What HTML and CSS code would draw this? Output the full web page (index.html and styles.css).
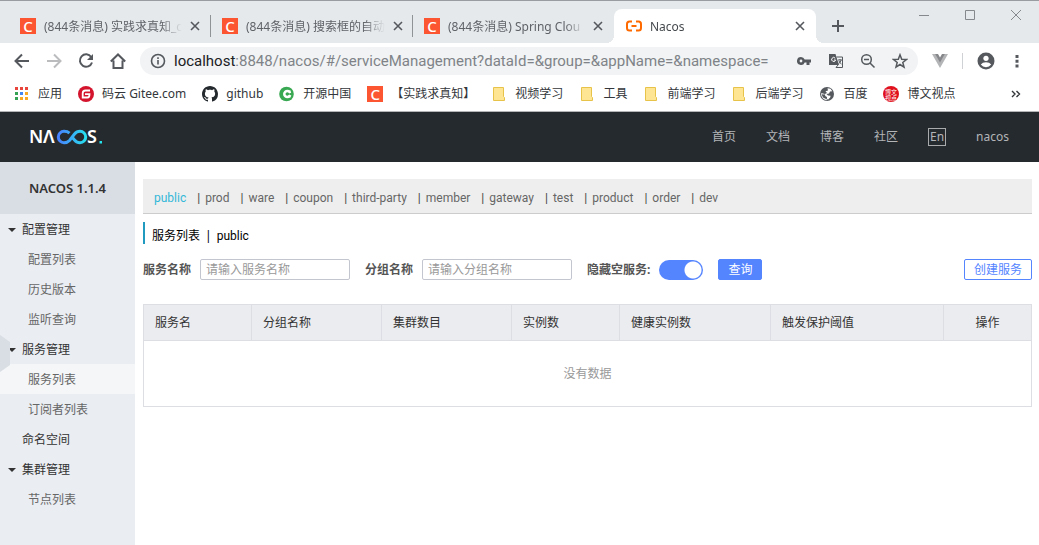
FILE: index.html
```html
<!DOCTYPE html>
<html lang="zh-CN">
<head>
<meta charset="utf-8">
<title>Nacos</title>
<link rel="stylesheet" href="styles.css">
</head>
<body>
<div class="browser">
  <div class="tabstrip">
    <div class="tab">
      <span class="csdn">C</span><span class="tab-title">(844条消息) 实践求真知_c</span>
      <button class="close" aria-label="关闭标签页"><svg width="10" height="10" viewBox="0 0 10 10"><path d="M1 1l8 8M9 1l-8 8"/></svg></button>
    </div>
    <div class="tab divided">
      <span class="csdn">C</span><span class="tab-title">(844条消息) 搜索框的自动</span>
      <button class="close" aria-label="关闭标签页"><svg width="10" height="10" viewBox="0 0 10 10"><path d="M1 1l8 8M9 1l-8 8"/></svg></button>
    </div>
    <div class="tab divided">
      <span class="csdn">C</span><span class="tab-title">(844条消息) Spring Clou</span>
      <button class="close" aria-label="关闭标签页"><svg width="10" height="10" viewBox="0 0 10 10"><path d="M1 1l8 8M9 1l-8 8"/></svg></button>
    </div>
    <div class="tab active">
      <svg class="ali" width="16" height="16" viewBox="0 0 16 16"><path d="M6 3.500H3.500Q1 3.500 1 6v4q0 2.500 2.500 2.500H6M10 3.500h2.500Q15 3.500 15 6v4q0 2.500-2.500 2.500H10M5.500 8h5"/></svg><span class="tab-title">Nacos</span>
      <button class="close" aria-label="关闭标签页"><svg width="10" height="10" viewBox="0 0 10 10"><path d="M1 1l8 8M9 1l-8 8"/></svg></button>
    </div>
    <button class="newtab" aria-label="新标签页"><svg width="12" height="12" viewBox="0 0 12 12"><path d="M6 0v12M0 6h12"/></svg></button>
    <div class="window-buttons">
      <button aria-label="最小化"><svg width="12" height="12" viewBox="0 0 12 12"><path d="M1 6.500h10"/></svg></button>
      <button aria-label="最大化"><svg width="12" height="12" viewBox="0 0 12 12"><path d="M1.500 1.500h9v9h-9z"/></svg></button>
      <button aria-label="关闭"><svg width="12" height="12" viewBox="0 0 12 12"><path d="M1 1l10 10M11 1L1 11"/></svg></button>
    </div>
  </div>

  <div class="toolbar">
    <div class="nav-buttons">
      <button aria-label="后退"><svg width="16" height="16" viewBox="0 0 16 16"><path d="M15 8H2M8 1.500L1.500 8 8 14.500"/></svg></button>
      <button class="off" aria-label="前进"><svg width="16" height="16" viewBox="0 0 16 16"><path d="M1 8h13M8 1.500L14.500 8 8 14.500"/></svg></button>
      <button aria-label="重新加载"><svg width="16" height="16" viewBox="0 0 16 16"><path d="M13.200 4A6.200 6.200 0 1 0 14 9.500"/><path class="fill" d="M15 1v6H9z"/></svg></button>
      <button aria-label="主页"><svg width="16" height="16" viewBox="0 0 16 16"><path d="M.8 8.500L8 1.500l7.200 7M3.500 7.500V15h9V7.500"/></svg></button>
    </div>
    <div class="omnibox">
      <svg class="info" width="16" height="16" viewBox="0 0 16 16"><circle cx="8" cy="8" r="6.500"/><path d="M8 7v4.500M8 4.200v1.800"/></svg>
      <div class="url" role="textbox" aria-label="地址栏" contenteditable="true" spellcheck="false"><span class="host">localhost</span>:8848/nacos/#/serviceManagement?dataId=&amp;group=&amp;appName=&amp;namespace=</div>
      <div class="omni-icons">
        <button aria-label="密码"><svg width="16" height="16" viewBox="0 0 16 16"><path class="fill" fill-rule="evenodd" d="M5 4a4 4 0 0 1 3.700 2.500H15v3h-1.500V12h-3V9.500H8.700A4 4 0 1 1 5 4zm0 2.600a1.400 1.400 0 1 0 0 2.800 1.400 1.400 0 0 0 0-2.800z"/></svg></button>
        <button aria-label="翻译"><svg width="16" height="16" viewBox="0 0 16 16"><path class="fill" d="M1 1h6.500l3.500 11H1z"/><path class="thin" d="M8.500 4H14.500v10.500H8l2-2.500M10 7h4M12 6v1M13 7.200q-.5 2.300-2.500 3.500M11 8q.8 2 2.500 3"/><path class="white" d="M7.200 5.200A2 2 0 1 0 7.600 7H6"/></svg></button>
        <button aria-label="缩放"><svg width="16" height="16" viewBox="0 0 16 16"><path class="medium" d="M10 10l4.500 4.500M4 6.500h5"/><circle class="medium" cx="6.500" cy="6.500" r="4.800"/></svg></button>
        <button aria-label="收藏"><svg width="16" height="16" viewBox="0 0 16 16"><path class="medium" d="M8 1.800l1.700 4.400 4.700.3-3.600 3 1.200 4.600L8 11.500l-4 2.600 1.200-4.600-3.600-3 4.700-.3z"/></svg></button>
      </div>
    </div>
    <div class="extensions">
      <svg width="16" height="16" viewBox="0 0 16 16"><path fill="#b3b5b7" d="M0 1h5l3 5 3-5h5L8 15z"/><path fill="#85878a" d="M3.200 1H6l2 3.500L10 1h2.800L8 9.500z"/></svg>
      <span class="bar"></span>
      <button aria-label="用户"><svg width="18" height="18" viewBox="0 0 18 18"><circle class="fill" cx="9" cy="9" r="8.500"/><g class="person"><circle cx="9" cy="6.300" r="2.600"/><path d="M3.800 12.600q1.700-2.400 5.200-2.400t5.200 2.400q-2 2.600-5.200 2.600t-5.200-2.600z"/></g></svg></button>
      <button aria-label="菜单"><svg width="16" height="16" viewBox="0 0 16 16"><path class="fill" d="M6.500 2h3v3h-3zM6.500 6.800h3v3h-3zM6.500 11.500h3v3h-3z"/></svg></button>
    </div>
  </div>

  <nav class="bookmarks">
    <a href="#"><svg width="16" height="16" viewBox="0 0 16 16"><path fill="#e8453c" d="M1 1h3v3H1zM6 1h3v3H6zM11 1h3v3h-3z"/><path fill="#34a153" d="M1 6h3v3H1zM1 11h3v3H1z"/><path fill="#4285f4" d="M6 6h3v3H6z"/><path fill="#f9a825" d="M11 6h3v3h-3zM6 11h3v3H6zM11 11h3v3h-3z"/></svg>应用</a>
    <a href="#"><svg width="16" height="16" viewBox="0 0 16 16"><circle cx="8" cy="8" r="8" fill="#d4142d"/><path fill="none" stroke="#fff" stroke-width="1.800" d="M12 4.500H7.500Q4.700 4.500 4.700 7.300v4.200H9.500Q11.500 11.500 11.500 8.200H7"/></svg>码云 Gitee.com</a>
    <a href="#"><svg width="16" height="16" viewBox="0 0 16 16"><path fill="#24292e" d="M8 0C3.580 0 0 3.580 0 8c0 3.540 2.290 6.530 5.470 7.590.4.070.55-.17.55-.38 0-.19-.01-.82-.01-1.490-2.010.37-2.530-.49-2.690-.94-.09-.23-.48-.94-.82-1.130-.28-.15-.68-.52-.01-.53.63-.01 1.080.58 1.230.82.72 1.210 1.870.87 2.330.66.07-.52.28-.87.51-1.070-1.780-.2-3.640-.89-3.640-3.950 0-.87.31-1.590.82-2.150-.08-.2-.36-1.020.08-2.120 0 0 .67-.21 2.200.82.64-.18 1.320-.27 2-.27s1.360.09 2 .27c1.530-1.040 2.200-.82 2.200-.82.44 1.100.16 1.920.08 2.120.51.56.82 1.270.82 2.150 0 3.070-1.870 3.750-3.650 3.950.29.25.54.73.54 1.480 0 1.070-.01 1.930-.01 2.200 0 .21.15.46.55.38A8.010 8.010 0 0 0 16 8c0-4.420-3.580-8-8-8z"/></svg>github</a>
    <a href="#"><svg width="16" height="16" viewBox="0 0 16 16"><circle cx="7.500" cy="8" r="7.300" fill="#39a852"/><path fill="none" stroke="#fff" stroke-width="2.600" d="M11.800 5.500l-1.300.4A3 3 0 1 0 10.500 10l1.300.6"/></svg>开源中国</a>
    <a href="#"><span class="csdn">C</span>【实践求真知】</a>
    <a href="#"><svg width="16" height="16" viewBox="0 0 16 16"><path fill="#fde594" stroke="#e8c34a" d="M2.500 1.500h10v9l1 1v3h-11z"/></svg>视频学习</a>
    <a href="#"><svg width="16" height="16" viewBox="0 0 16 16"><path fill="#fde594" stroke="#e8c34a" d="M2.500 1.500h10v9l1 1v3h-11z"/></svg>工具</a>
    <a href="#"><svg width="16" height="16" viewBox="0 0 16 16"><path fill="#fde594" stroke="#e8c34a" d="M2.500 1.500h10v9l1 1v3h-11z"/></svg>前端学习</a>
    <a href="#"><svg width="16" height="16" viewBox="0 0 16 16"><path fill="#fde594" stroke="#e8c34a" d="M2.500 1.500h10v9l1 1v3h-11z"/></svg>后端学习</a>
    <a href="#"><svg width="16" height="16" viewBox="0 0 16 16"><circle cx="8" cy="8" r="7" fill="#55595e"/><path fill="#fff" d="M8.500 2.200l3 .6 1.800 2.400-2.300.3-1 2-2.500.6 1.500 1.400 2.500.3-.2 1.500-2 2.300-1.500-.3.200-2.300-1.800-1-.2-2L3 7.300l-1-.2 2 4.500 4 2-.3.600Q2.500 13.500 2 8l3 .4L8 7l-1.500-1.800L9 4.500z"/></svg>百度</a>
    <a href="#"><svg width="16" height="16" viewBox="0 0 16 16"><circle cx="8" cy="8" r="8" fill="#e0101c"/><text class="stamp" x="8" y="7.500">博文</text><text class="stamp" x="8" y="13.500">视点</text></svg>博文视点</a>
    <button class="more" aria-label="更多书签"><svg width="10" height="8" viewBox="0 0 10 8"><path d="M1 1l3 3-3 3M5.500 1l3 3-3 3"/></svg></button>
  </nav>
</div>

<header class="site-header">
  <svg class="logo" width="74" height="18" viewBox="0 0 74 18" role="img" aria-label="NACOS">
    <defs><linearGradient id="loop" gradientUnits="userSpaceOnUse" x1="28" x2="58" y1="0" y2="0"><stop offset="0" stop-color="#4a7dff"/><stop offset="1" stop-color="#25e4ee"/></linearGradient></defs>
    <text x="0" y="15">N</text><text x="14" y="15">Λ</text>
    <path fill="none" stroke="url(#loop)" stroke-width="3" d="M40.500 5.200Q38.500 3.300 35 3.300A5.700 5.700 0 0 0 35 14.700Q38.500 14.700 40.500 12.500L45.500 6Q47.800 3.300 51 3.300A5.700 5.700 0 0 1 51 14.700Q47.800 14.700 45.500 12L43 9"/>
    <text x="58" y="15">S</text><path fill="#25e4ee" d="M70.500 13h2.500v2.500h-2.500z"/>
  </svg>
  <nav class="site-nav">
    <a href="#">首页</a><a href="#">文档</a><a href="#">博客</a><a href="#">社区</a>
    <button class="lang">En</button><a href="#">nacos</a>
  </nav>
</header>

<div class="layout">
  <aside class="sidebar">
    <h1 class="version">NACOS 1.1.4</h1>
    <nav class="menu">
      <a class="group caret" href="#">配置管理</a>
      <a href="#">配置列表</a>
      <a href="#">历史版本</a>
      <a href="#">监听查询</a>
      <a class="group caret" href="#">服务管理</a>
      <a class="selected" href="#">服务列表</a>
      <a href="#">订阅者列表</a>
      <a class="group" href="#">命名空间</a>
      <a class="group caret" href="#">集群管理</a>
      <a href="#">节点列表</a>
    </nav>
    <button class="handle" aria-label="收起菜单"></button>
  </aside>

  <main class="content">
    <nav class="namespaces">
      <a class="current" href="#">public</a>
      <span>|<a href="#">prod</a></span>
      <span>|<a href="#">ware</a></span>
      <span>|<a href="#">coupon</a></span>
      <span>|<a href="#">third-party</a></span>
      <span>|<a href="#">member</a></span>
      <span>|<a href="#">gateway</a></span>
      <span>|<a href="#">test</a></span>
      <span>|<a href="#">product</a></span>
      <span>|<a href="#">order</a></span>
      <span>|<a href="#">dev</a></span>
    </nav>
    <h2 class="title"><span>服务列表</span><span>|</span><span class="latin">public</span></h2>
    <form class="filters">
      <label for="service">服务名称</label>
      <input id="service" class="field" type="text" placeholder="请输入服务名称">
      <label for="grp">分组名称</label>
      <input id="grp" class="field" type="text" placeholder="请输入分组名称">
      <label for="hide">隐藏空服务:</label>
      <input id="hide" class="switch" type="checkbox" role="switch" checked>
      <button class="primary" type="button">查询</button>
      <button class="outline" type="button">创建服务</button>
    </form>
    <table class="services">
      <colgroup><col class="c-name"><col class="c-group"><col class="c-group"><col class="c-name"><col class="c-healthy"><col class="c-limit"><col class="c-action"></colgroup>
      <thead><tr><th>服务名</th><th>分组名称</th><th>集群数目</th><th>实例数</th><th>健康实例数</th><th>触发保护阈值</th><th class="center">操作</th></tr></thead>
      <tbody><tr><td colspan="7">没有数据</td></tr></tbody>
    </table>
  </main>
</div>
</body>
</html>
```

FILE: styles.css
```css
* { box-sizing: border-box; }

body {
  margin: 0;
  min-height: 100vh;
  display: flex;
  flex-direction: column;
  background: #fff;
  color: #333;
  font: 12px/18px "Noto Sans", "Noto Sans CJK SC", sans-serif;
}

a { color: inherit; text-decoration: none; }
button { padding: 0; border: 0; background: none; font: inherit; color: inherit; }
svg { display: block; flex: none; }

/* Browser frame */
.browser { border-bottom: 1px solid #b4b5b7; }
.tabstrip {
  display: flex;
  height: 43px;
  padding: 8px 17px 0 8px;
  border-top: 1px solid #999ca0;
  background: #e6e9ec;
}
.tab {
  position: relative;
  display: flex;
  align-items: center;
  gap: 8px;
  flex: 0 1 202px;
  min-width: 0;
  padding: 0 11px 0 12px;
  color: #5f6368;
}
.divided { border-left: 1px solid #909396; border-image: linear-gradient(transparent 7px, #909396 7px, #909396 27px, transparent 27px) 1; }
.divided { padding-left: 11px; }
.active { border-radius: 8px 8px 0 0; background: #fff; color: #45494d; }
.active::before, .active::after {
  content: "";
  position: absolute;
  bottom: 0;
  width: 8px;
  height: 8px;
}
.active::before { right: 100%; background: radial-gradient(circle at 0 0, transparent 8px, #fff 8px); }
.active::after { left: 100%; background: radial-gradient(circle at 100% 0, transparent 8px, #fff 8px); }
.tab-title {
  flex: 1;
  padding-top: 2px;
  white-space: nowrap;
  -webkit-mask-image: linear-gradient(90deg, #000 85%, transparent);
  mask-image: linear-gradient(90deg, #000 85%, transparent);
}
.csdn {
  flex: none;
  width: 16px;
  height: 16px;
  background: #fc5531;
  color: #fff;
  font: 500 15px/16px "Noto Sans", sans-serif;
  text-align: center;
}
.close svg { fill: none; stroke: #55595e; stroke-width: 1.6; }
.ali { fill: none; stroke: #ff6a00; stroke-width: 2; }
.newtab { padding: 0 16px; }
.newtab svg { stroke: #55595e; stroke-width: 2; }
.window-buttons { display: flex; gap: 34px; margin-left: auto; align-items: flex-start; }
.window-buttons svg { fill: none; stroke: #85888c; stroke-width: 1; }

.toolbar { display: flex; align-items: center; gap: 14px; height: 36px; padding: 0 14px; }
.toolbar button svg { fill: none; stroke: #55595e; stroke-width: 2; }
.toolbar button .fill { fill: #55595e; stroke: none; }
.toolbar button .thin { stroke-width: 1; }
.toolbar button .medium { stroke-width: 1.5; }
.toolbar button .white { stroke: #fff; stroke-width: 1; }
.toolbar .person { fill: #fff; stroke: none; }
.nav-buttons { display: flex; gap: 16px; }
.nav-buttons .off { opacity: .4; }
.omnibox {
  display: flex;
  align-items: center;
  flex: 1;
  min-width: 0;
  gap: 8px;
  height: 28px;
  padding: 0 10px;
  border-radius: 14px;
  background: #f1f3f4;
}
.info { fill: none; stroke: #55595e; stroke-width: 1.6; }
.url { flex: 1; overflow: hidden; white-space: nowrap; color: #7f8388; font-family: Roboto, sans-serif; font-size: 15px; line-height: 20px; }
.host { color: #202124; }
.omni-icons { display: flex; gap: 16px; }
.extensions { display: flex; align-items: center; gap: 14px; }
.bar { width: 1px; height: 16px; background: #cfd1d4; }

.bookmarks { display: flex; align-items: center; gap: 16px; height: 32px; padding: 0 18px 3px 14px; color: #33363a; white-space: nowrap; }
.bookmarks a { display: flex; align-items: center; gap: 8px; }
.stamp { fill: #fff; font-size: 6px; text-anchor: middle; }
.more { margin-left: auto; }
.more svg { fill: none; stroke: #33363a; stroke-width: 1.4; }

/* Site header */
.site-header { display: flex; align-items: center; justify-content: space-between; height: 50px; padding: 0 30px 0 29px; background: #252a2f; color: #b3b5b7; }
.logo { overflow: visible; }
.logo text { fill: #fff; font: 600 18px/18px "Noto Sans", sans-serif; }
.site-nav { display: flex; align-items: center; gap: 30px; }
.lang { width: 18px; height: 18px; border: 1px solid #a8aaac; line-height: 16px; }

/* Page body */
.layout { display: flex; flex: 1; }
.sidebar { position: relative; flex: none; width: 135px; background: #eaedf2; }
.version { margin: 0; background: #d9dee4; font-size: 13px; line-height: 52px; font-weight: 600; text-align: center; }
.menu a { display: block; padding: 2px 0 0 28px; line-height: 28px; color: #666; }
.menu .group { display: flex; align-items: center; padding-left: 22px; color: #333; }
.menu .caret { gap: 6px; padding-left: 8px; }
.caret::before { content: ""; border: 4px solid transparent; border-top-color: #333; border-bottom: 0; }
.menu .selected { background: #f4f6f8; }
.handle { position: absolute; left: 0; top: 173px; width: 10px; height: 37px; background: #d9dee4; clip-path: polygon(0 0, 100% 7px, 100% 30px, 0 100%); }

.content { flex: 1; min-width: 0; padding: 17px 7px 0 8px; }
.namespaces { display: flex; flex-wrap: wrap; gap: 11px; padding: 10px 11px 6px; border-bottom: 1px solid #ccc; background: #eee; font-family: Roboto, sans-serif; }
.namespaces span { display: flex; gap: 5px; color: #444; }
.namespaces a { color: #666; }
.namespaces .current { color: #33b8d8; }
.title { display: flex; gap: 5px; margin: 8px 0 15px; padding: 7px 0 1px 7px; border-left: 2px solid #209bbf; color: #000; font-size: 12px; line-height: 14px; font-weight: 400; }
.latin { font-family: Roboto, sans-serif; }
.filters { display: flex; align-items: center; gap: 9px; }
.filters label { color: #555; font-weight: 700; white-space: nowrap; }
.field { width: 150px; height: 21px; margin-right: 6px; padding: 0 5px; border: 1px solid #c4c6cf; border-radius: 2px; background: #fff; font: inherit; }
.field::placeholder { color: #999; }
.switch { appearance: none; flex: none; width: 44px; height: 20px; margin: 0 6px 0 0; border-radius: 10px; background: radial-gradient(circle at 34px 10px, #fff 8px, transparent 9px) #5584ff; }
.primary, .outline { height: 21px; border: 1px solid #5584ff; border-radius: 2px; padding: 0 9px; line-height: 19px; }
.primary { background: #5584ff; color: #fff; }
.outline { margin-left: auto; color: #5584ff; }

.services { width: 100%; margin-top: 24px; border-collapse: collapse; table-layout: fixed; }
.services th, .services td { border: 1px solid #dcdee3; }
.services th { height: 36px; padding: 0 11px; background: #ebecf0; font-weight: 400; text-align: left; }
.services .center { padding: 0; text-align: center; }
.services td { height: 66px; padding: 0; color: #999; text-align: center; }
.c-name { width: 12.15%; }
.c-group { width: 14.65%; }
.c-healthy { width: 17%; }
.c-limit { width: 19.5%; }
.c-action { width: 9.9%; }
```
